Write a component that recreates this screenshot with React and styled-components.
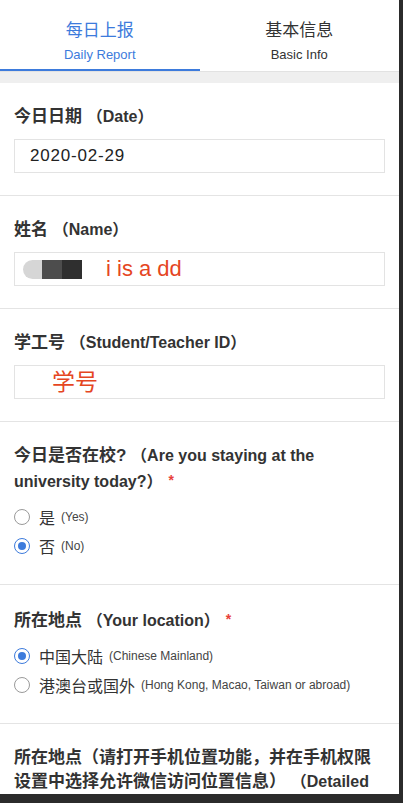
import React from 'react';
import styled, { createGlobalStyle } from 'styled-components';

const Global = createGlobalStyle`
  html, body {
    margin: 0;
    padding: 0;
    background: #2b2b2b;
  }
  * {
    box-sizing: border-box;
  }
`;

const FONT = `"Liberation Sans", "Noto Sans CJK SC", sans-serif`;
const BLUE = '#3d7bdc';
const RED = '#e5461f';

const Screen = styled.div`
  width: 399px;
  height: 794px;
  overflow: hidden;
  background: #fff;
  font-family: ${FONT};
  color: #333;
`;

const Tabs = styled.div`
  display: flex;
  border-bottom: 1px solid #e2e2e2;
`;

const Tab = styled.div`
  flex: 1;
  height: 71px;
  display: flex;
  flex-direction: column;
  align-items: center;
  padding-top: 19px;
  color: ${p => (p.active ? BLUE : '#333')};
  border-bottom: 2px solid ${p => (p.active ? BLUE : 'transparent')};
`;

const TabTitle = styled.div`
  font-size: 17px;
  line-height: 24px;
`;

const TabSub = styled.div`
  font-size: 13px;
  line-height: 16px;
  margin-top: 4px;
`;

const Gap = styled.div`
  height: 11px;
  background: #efefef;
`;

const Section = styled.div`
  padding: 22px 14px ${p => (p.tight ? 22 : 24)}px;
  border-bottom: 1px solid #e4e4e4;
`;

const Label = styled.div`
  font-size: 17px;
  line-height: 24px;
  font-weight: bold;
  color: #333;
`;

const En = styled.span`
  font-size: 16px;
`;

const Star = styled.span`
  color: #e8403a;
  font-size: 14px;
  margin-left: 6px;
  vertical-align: 2px;
`;

const TextBox = styled.div`
  margin-top: 10px;
  height: 34px;
  border: 1px solid #e3e3e3;
  display: flex;
  align-items: center;
  padding: 0 15px;
  font-size: 17px;
  letter-spacing: 0.8px;
  color: #222;
`;

const Redacted = styled.div`
  display: flex;
  height: 19px;
  margin-left: -7px;
`;

const Chip = styled.div`
  width: ${p => p.w}px;
  background: ${p => p.c};
  border-radius: ${p => (p.round ? '10px 0 0 10px' : '0')};
`;

const Annot = styled.span`
  color: ${RED};
  font-size: ${p => p.size}px;
  margin-left: ${p => p.indent}px;
  letter-spacing: 0;
  line-height: 1;
`;

const Options = styled.div`
  margin-top: 8px;
`;

const Option = styled.div`
  display: flex;
  align-items: center;
  height: 29px;
`;

const Radio = styled.span`
  width: 16px;
  height: 16px;
  border-radius: 50%;
  border: 1px solid ${p => (p.checked ? BLUE : '#9a9a9a')};
  display: flex;
  align-items: center;
  justify-content: center;
  margin-right: 9px;
  flex-shrink: 0;
  &::after {
    content: '';
    display: ${p => (p.checked ? 'block' : 'none')};
    width: 8px;
    height: 8px;
    border-radius: 50%;
    background: ${BLUE};
  }
`;

const OptText = styled.span`
  font-size: 16px;
  color: #333;
`;

const OptNote = styled.span`
  font-size: 12px;
  color: #444;
  margin-left: 6px;
`;

const Field = ({ cn, en, required, tight, children }) => (
  <Section tight={tight}>
    <Label>
      {cn}
      <En>{en}</En>
      {required && <Star>*</Star>}
    </Label>
    {children}
  </Section>
);

const RadioGroup = ({ items }) => (
  <Options>
    {items.map(it => (
      <Option key={it.text}>
        <Radio checked={it.checked} />
        <OptText>{it.text}</OptText>
        <OptNote>{it.note}</OptNote>
      </Option>
    ))}
  </Options>
);

export default function App() {
  return (
    <Screen>
      <Global />
      <Tabs>
        <Tab active>
          <TabTitle>每日上报</TabTitle>
          <TabSub>Daily Report</TabSub>
        </Tab>
        <Tab>
          <TabTitle>基本信息</TabTitle>
          <TabSub>Basic Info</TabSub>
        </Tab>
      </Tabs>
      <Gap />

      <Field cn="今日日期 " en="（Date）" tight>
        <TextBox>2020-02-29</TextBox>
      </Field>

      <Field cn="姓名 " en="（Name）" tight>
        <TextBox>
          <Redacted>
            <Chip w={19} c="#d6d6d6" round />
            <Chip w={20} c="#4d4d4d" />
            <Chip w={20} c="#2f2f2f" />
          </Redacted>
          <Annot size={22} indent={24}>i is a dd</Annot>
        </TextBox>
      </Field>

      <Field cn="学工号 " en="（Student/Teacher ID）" tight>
        <TextBox>
          <Annot size={23} indent={22}>学号</Annot>
        </TextBox>
      </Field>

      <Field cn="今日是否在校? " en="（Are you staying at the university today?）" required>
        <RadioGroup
          items={[
            { text: '是', note: '(Yes)' },
            { text: '否', note: '(No)', checked: true },
          ]}
        />
      </Field>

      <Field cn="所在地点 " en="（Your location）" required>
        <RadioGroup
          items={[
            { text: '中国大陆', note: '(Chinese Mainland)', checked: true },
            { text: '港澳台或国外', note: '(Hong Kong, Macao, Taiwan or abroad)' },
          ]}
        />
      </Field>

      <Field
        cn="所在地点（请打开手机位置功能，并在手机权限设置中选择允许微信访问位置信息） "
        en="（Detailed location）"
        required
      >
        <TextBox />
      </Field>
    </Screen>
  );
}
